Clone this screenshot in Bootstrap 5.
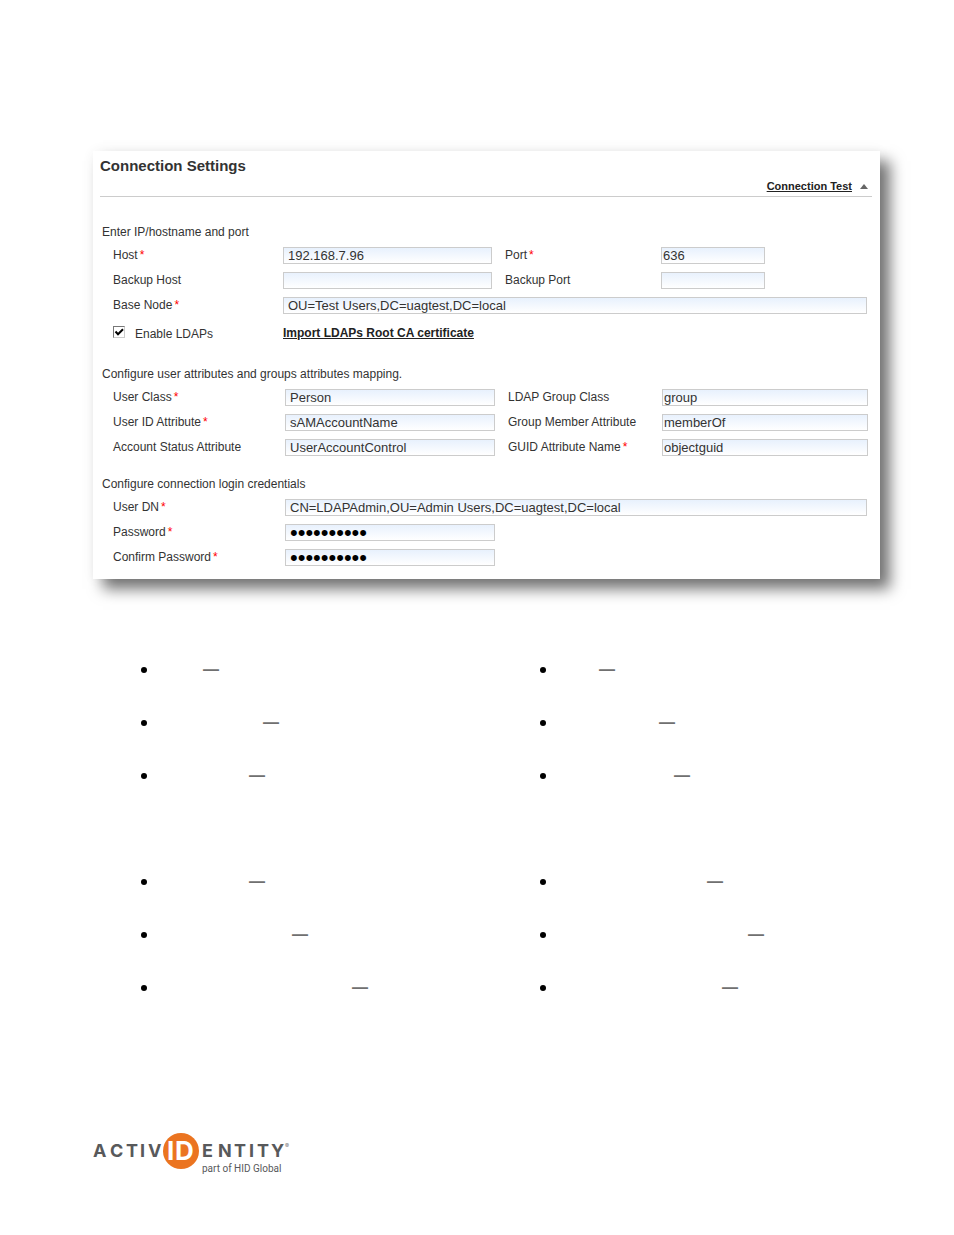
<!DOCTYPE html>
<html lang="en">
<head>
<meta charset="utf-8">
<meta name="viewport" content="width=device-width, initial-scale=1">
<title>Connection Settings</title>
<link rel="stylesheet" href="https://cdn.jsdelivr.net/npm/bootstrap@5.3.0/dist/css/bootstrap.min.css">
<style>
  body { font-family: "Liberation Sans", Arial, sans-serif; font-size: 12px; line-height: 16px; color: #333; background: #fff; }
  .sheet { padding: 151px 74px 60px 93px; }
  .settings { padding: 6px 8px 13px 7px; background: #fff; box-shadow: 10px 10px 14px rgba(0,0,0,.55), 0 0 14px rgba(0,0,0,.04); }
  .settings h1 { font-size: 15px; line-height: 18px; font-weight: 700; margin: 0; }
  .settings a { color: #222; font-weight: 700; }
  .test-bar { border-bottom: 1px solid #ccc; padding: 3px 4px 2px 0; gap: 8px; font-size: 11px; }
  .group-title { font-size: 12px; line-height: 16px; margin: 27px 0 7px 2px; font-weight: 400; }
  .fields + .group-title { margin-top: 23px; }
  .attrs + .group-title { margin-top: 20px; }
  .fields { display: grid; grid-template-columns: 157fr 209fr 143fr 104fr 89fr; column-gap: 13px; row-gap: 8px; padding: 0 5px 0 13px; align-items: center; }
  .fields.attrs { grid-template-columns: 159fr 210fr 141fr 206fr; padding-right: 4px; }
  .fields.login { grid-template-columns: 159fr 210fr 359fr; }
  .fields label { line-height: 17px; white-space: nowrap; }
  .fields .form-control { height: 17px; min-height: 0; padding: 0 4px; border: 1px solid #ccc; border-radius: 0; font-size: 13px; line-height: 15px; color: #333; background: linear-gradient(#e8f1fd, #fff); }
  .fields .form-control.snug { padding: 0 1px; }
  .fields input[type=password] { font-size: 22px; color: #000; }
  .to-end { grid-column: 2 / -1; }
  .new-row { grid-column-start: 1; }
  .req { color: #f00; margin-left: 2px; }
  .fields .form-check-input { width: 12px; height: 12px; margin: 0; border: 1px solid; border-color: #777 #ccc #ccc #777; border-radius: 0; background: #fff; }
  .fields .form-check-input:checked { background: #fff url("data:image/svg+xml,%3Csvg xmlns='http://www.w3.org/2000/svg' viewBox='0 0 10 10'%3E%3Cpath d='M1.500 4.500l2.500 2.700 5-5' fill='none' stroke='%23000' stroke-width='2'/%3E%3C/svg%3E"); }
  .check-line { gap: 10px; }
  .notes { font-size: 16px; line-height: 18px; font-weight: 700; color: #707070; padding-left: 48px; margin-top: 82px; }
  .notes + .notes { margin-top: 88px; }
  .notes ul { width: 54%; display: grid; row-gap: 35px; }
  .notes ul + ul { width: 46%; }
  .notes .dot { width: 6px; height: 6px; margin-right: 10px; border-radius: 50%; background: #000; }
  .notes .blank { height: 1px; }
  .page-foot { margin-top: 134px; }
  .brand { width: 200px; height: 48px; }
</style>
</head>
<body>
<main class="sheet">
  <form class="settings">
    <h1>Connection Settings</h1>
    <div class="test-bar d-flex justify-content-end align-items-center">
      <a href="#">Connection Test</a>
      <svg width="8" height="5" viewBox="0 0 8 5" aria-hidden="true"><path d="M4 0L8 5H0z" fill="#666"/></svg>
    </div>

    <h2 class="group-title">Enter IP/hostname and port</h2>
    <div class="fields">
      <label for="host">Host<span class="req">*</span></label>
      <input class="form-control" id="host" type="text" value="192.168.7.96">
      <label for="port">Port<span class="req">*</span></label>
      <input class="form-control snug" id="port" type="text" value="636">
      <label class="new-row" for="bhost">Backup Host</label>
      <input class="form-control" id="bhost" type="text">
      <label for="bport">Backup Port</label>
      <input class="form-control snug" id="bport" type="text">
      <label class="new-row" for="base">Base Node<span class="req">*</span></label>
      <input class="form-control to-end" id="base" type="text" value="OU=Test Users,DC=uagtest,DC=local">
      <div class="new-row check-line d-flex mt-1">
        <input class="form-check-input" id="ldaps" type="checkbox" checked>
        <label for="ldaps">Enable LDAPs</label>
      </div>
      <a class="to-end" href="#">Import LDAPs Root CA certificate</a>
    </div>

    <h2 class="group-title">Configure user attributes and groups attributes mapping.</h2>
    <div class="fields attrs">
      <label for="uclass">User Class<span class="req">*</span></label>
      <input class="form-control" id="uclass" type="text" value="Person">
      <label for="gclass">LDAP Group Class</label>
      <input class="form-control snug" id="gclass" type="text" value="group">
      <label for="uid">User ID Attribute<span class="req">*</span></label>
      <input class="form-control" id="uid" type="text" value="sAMAccountName">
      <label for="member">Group Member Attribute</label>
      <input class="form-control snug" id="member" type="text" value="memberOf">
      <label for="status">Account Status Attribute</label>
      <input class="form-control" id="status" type="text" value="UserAccountControl">
      <label for="guid">GUID Attribute Name<span class="req">*</span></label>
      <input class="form-control snug" id="guid" type="text" value="objectguid">
    </div>

    <h2 class="group-title">Configure connection login credentials</h2>
    <div class="fields login">
      <label for="dn">User DN<span class="req">*</span></label>
      <input class="form-control to-end" id="dn" type="text" value="CN=LDAPAdmin,OU=Admin Users,DC=uagtest,DC=local">
      <label class="new-row" for="pw">Password<span class="req">*</span></label>
      <input class="form-control" id="pw" type="password" value="aaaaaaaaaa">
      <label class="new-row" for="pw2">Confirm Password<span class="req">*</span></label>
      <input class="form-control" id="pw2" type="password" value="aaaaaaaaaa">
    </div>
  </form>

  <section class="notes d-flex">
    <ul class="list-unstyled mb-0">
      <li class="d-flex align-items-center"><i class="dot"></i><i class="blank" style="width:46px"></i>—</li>
      <li class="d-flex align-items-center"><i class="dot"></i><i class="blank" style="width:106px"></i>—</li>
      <li class="d-flex align-items-center"><i class="dot"></i><i class="blank" style="width:92px"></i>—</li>
    </ul>
    <ul class="list-unstyled mb-0">
      <li class="d-flex align-items-center"><i class="dot"></i><i class="blank" style="width:43px"></i>—</li>
      <li class="d-flex align-items-center"><i class="dot"></i><i class="blank" style="width:103px"></i>—</li>
      <li class="d-flex align-items-center"><i class="dot"></i><i class="blank" style="width:118px"></i>—</li>
    </ul>
  </section>
  <section class="notes d-flex">
    <ul class="list-unstyled mb-0">
      <li class="d-flex align-items-center"><i class="dot"></i><i class="blank" style="width:92px"></i>—</li>
      <li class="d-flex align-items-center"><i class="dot"></i><i class="blank" style="width:135px"></i>—</li>
      <li class="d-flex align-items-center"><i class="dot"></i><i class="blank" style="width:195px"></i>—</li>
    </ul>
    <ul class="list-unstyled mb-0">
      <li class="d-flex align-items-center"><i class="dot"></i><i class="blank" style="width:151px"></i>—</li>
      <li class="d-flex align-items-center"><i class="dot"></i><i class="blank" style="width:192px"></i>—</li>
      <li class="d-flex align-items-center"><i class="dot"></i><i class="blank" style="width:166px"></i>—</li>
    </ul>
  </section>

  <footer class="page-foot">
    <svg class="brand d-block" viewBox="0 0 200 48" role="img" aria-label="ActivIdentity, part of HID Global" font-family="Inter, sans-serif">
      <g fill="#58595b" font-size="18" font-weight="700">
        <text x="0 17 33 47 55" y="26">ACTIV</text>
        <text x="109 125 141 156 164 178" y="26">ENTITY</text>
      </g>
      <circle cx="88" cy="20" r="18" fill="#eb7420"/>
      <text x="74 82" y="29" font-size="26" font-weight="700" fill="#fff">ID</text>
      <text x="192" y="17" font-size="6" fill="#777">®</text>
      <text x="109" y="41" font-size="10" font-family="Roboto, sans-serif" fill="#58595b">part of HID Global</text>
    </svg>
  </footer>
</main>
<script src="https://cdn.jsdelivr.net/npm/bootstrap@5.3.0/dist/js/bootstrap.bundle.min.js"></script>
</body>
</html>
